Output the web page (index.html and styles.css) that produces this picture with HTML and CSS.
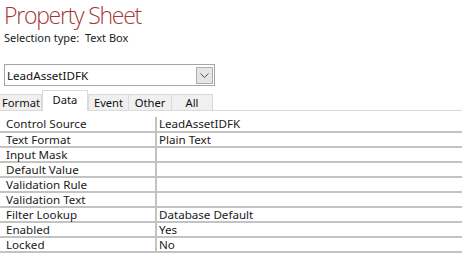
FILE: index.html
```html
<!DOCTYPE html>
<html>
<head>
<meta charset="utf-8">
<link rel="stylesheet" href="styles.css">
</head>
<body>
<div class="sheet">
  <div class="header">
    <h1 class="title">Property Sheet</h1>
    <div class="seltype">Selection type:&nbsp; Text Box</div>
  </div>
  <div class="combo">
    <span class="combo-text">LeadAssetIDFK</span>
    <span class="combo-btn">
      <svg width="9" height="5" viewBox="0 0 9 5"><path d="M0.5 0.5 L4.5 4.5 L8.5 0.5" fill="none" stroke="#505050" stroke-width="1"/></svg>
    </span>
  </div>
  <div class="tabs">
    <div class="tab t-format">Format</div>
    <div class="tab t-data active">Data</div>
    <div class="tab t-event">Event</div>
    <div class="tab t-other">Other</div>
    <div class="tab t-all">All</div>
    <div class="tab-rest"></div>
  </div>
  <div class="grid">
    <div class="row"><div class="name">Control Source</div><div class="val">LeadAssetIDFK</div></div>
    <div class="row"><div class="name">Text Format</div><div class="val">Plain Text</div></div>
    <div class="row"><div class="name">Input Mask</div><div class="val"></div></div>
    <div class="row"><div class="name">Default Value</div><div class="val"></div></div>
    <div class="row"><div class="name">Validation Rule</div><div class="val"></div></div>
    <div class="row"><div class="name">Validation Text</div><div class="val"></div></div>
    <div class="row"><div class="name">Filter Lookup</div><div class="val">Database Default</div></div>
    <div class="row"><div class="name">Enabled</div><div class="val">Yes</div></div>
    <div class="row"><div class="name">Locked</div><div class="val">No</div></div>
  </div>
</div>
</body>
</html>
```

FILE: styles.css
```css
html, body {
  margin: 0;
  padding: 0;
  background: #ffffff;
}
.sheet {
  font-family: "Noto Sans", "Open Sans", sans-serif;
  font-size: 11.6px;
  color: #1a1a1a;
  width: 462px;
}
.header {
  padding: 2px 0 0 4px;
  height: 62px;
}
.title {
  margin: 0;
  font-family: "Open Sans", "Noto Sans", sans-serif;
  font-weight: 300;
  font-size: 23px;
  letter-spacing: -1.25px;
  line-height: 27px;
  color: #a4373a;
}
.seltype {
  margin-top: 2px;
  line-height: 14px;
  color: #222;
  font-size: 11px;
}
.combo {
  margin-left: 4px;
  width: 209px;
  height: 20px;
  border: 1px solid #a6a6a6;
  display: flex;
  align-items: center;
  justify-content: space-between;
}
.combo-text {
  padding-left: 2px;
  color: #111;
}
.combo-btn {
  width: 17px;
  height: 17px;
  margin-right: 1px;
  background: #e5e5e5;
  border: 1px solid #adadad;
  box-sizing: border-box;
  display: flex;
  align-items: center;
  justify-content: center;
}
.tabs {
  margin-top: 3px;
  display: flex;
  align-items: flex-end;
  height: 22px;
  font-size: 11.2px;
}
.tab {
  box-sizing: border-box;
  height: 17px;
  background: #f0f0f0;
  border: 1px solid #dadada;
  border-left: none;
  text-align: center;
  line-height: 16px;
  color: #111;
  white-space: nowrap;
}
.t-format { width: 42px; text-align: left; padding-left: 2px; }
.t-data { width: 46px; }
.t-event { width: 41px; border-left: 1px solid #dadada; }
.t-other { width: 43px; }
.t-all { width: 41px; }
.tab.active {
  height: 21px;
  background: #ffffff;
  border: 1px solid #dadada;
  border-bottom: none;
  line-height: 17px;
  padding-bottom: 3px;
}
.tab-rest {
  flex: 1;
  border-bottom: 1px solid #dadada;
}
.grid {
  margin-top: 6px;
}
.row {
  display: flex;
  height: 13px;
  border-bottom: 2px solid #c3c3c3;
  line-height: 13px;
}
.row:first-child {
  height: 14px;
}
.name {
  width: 149px;
  padding-left: 6px;
  border-right: 2px solid #c3c3c3;
  white-space: nowrap;
}
.val {
  flex: 1;
  padding-left: 2px;
  white-space: nowrap;
}
```
